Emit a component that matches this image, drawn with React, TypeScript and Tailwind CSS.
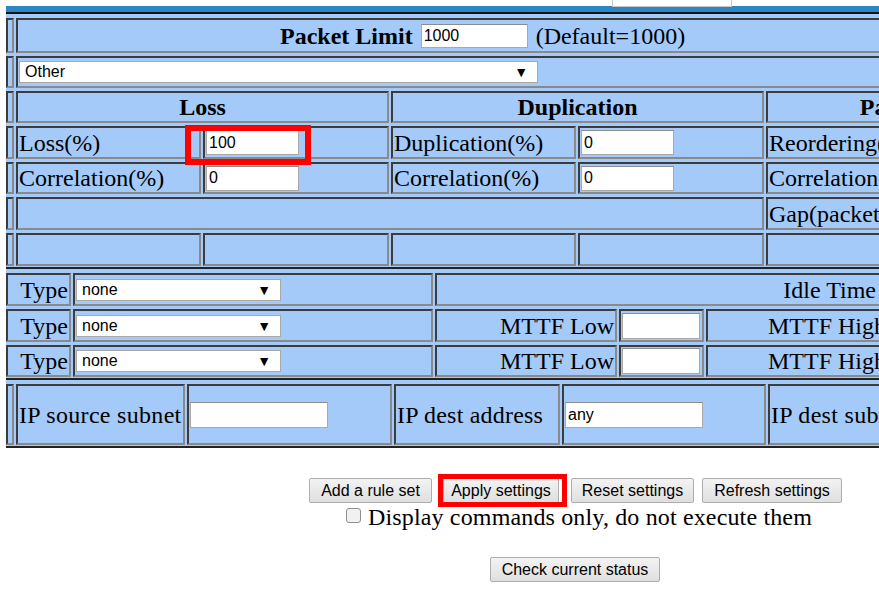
import type { ReactNode } from 'react';

const SANS = "font-['Liberation_Sans',Arial,sans-serif]";

// inset table cell, like border="1" on an old html table
const Cell = ({ className = '', children }: { className?: string; children?: ReactNode }) => (
    <div
        className={`flex items-center bg-[#a4cafa] border-2 border-t-[#3c3c3c] border-l-[#3c3c3c] border-b-[#8a8a8a] border-r-[#8a8a8a] px-px whitespace-nowrap ${className}`}
    >
        {children}
    </div>
);

const TextBox = ({ value = '', className = '' }: { value?: string; className?: string }) => (
    <input
        readOnly
        value={value}
        className={`shrink-0 bg-white border border-[#a9a9a9] border-t-[#8c8c8c] px-[2px] ${SANS} text-[16px] text-black outline-none ${className}`}
    />
);

const Dropdown = ({ value, className = '' }: { value: string; className?: string }) => (
    <div
        className={`shrink-0 flex items-center justify-between bg-white border border-[#a9a9a9] pl-[5px] pr-[9px] ${SANS} text-[16px] leading-none ${className}`}
    >
        <span>{value}</span>
        <span className="text-[14px]">▼</span>
    </div>
);

const Button = ({ label, className = '' }: { label: string; className?: string }) => (
    <button
        className={`h-[25px] shrink-0 border border-[#adadad] rounded-[2px] bg-linear-to-b from-[#f3f3f3] to-[#dfdfdf] ${SANS} text-[16px] text-black leading-none ${className}`}
    >
        {label}
    </button>
);

const Tiny = () => <Cell />;

const App = () => {
    return (
        <div className="relative w-[879px] h-[592px] overflow-hidden bg-white font-['Liberation_Serif','Times_New_Roman',serif] text-[24px] text-black">
            {/* top strip with the clipped field from above */}
            <div className="h-[6px] pl-[612px]">
                <div className="relative z-10 h-[7px] w-[120px] bg-white border-x border-b border-[#c4c4c4]" />
            </div>
            <div className="ml-[6px] h-[6px] bg-[#2b86c5]" />
            <div className="ml-[6px] h-[2px] bg-[#111111]" />

            {/* Section A: limits, loss, duplication, reordering */}
            <div className="ml-[6px] w-[1150px] bg-[#a4cafa] pt-[4px] pb-[1px] border-b-2 border-[#222222]">
                <div className="grid grid-cols-[8px_185px_186px_185px_186px_185px_186px] grid-rows-[35px_32px_32px_33px_32px_33px_33px] gap-x-[2px] gap-y-[3px]">
                    <Tiny />
                    <Cell className="col-span-6 pl-[262px]">
                        <span className="font-bold">Packet Limit</span>
                        <TextBox value="1000" className="ml-[8px] w-[107px] h-[24px]" />
                        <span className="ml-[8px]">(Default=1000)</span>
                    </Cell>

                    <Tiny />
                    <Cell className="col-span-6">
                        <Dropdown value="Other" className="w-[519px] h-[22px]" />
                    </Cell>

                    <Tiny />
                    <Cell className="col-span-2 justify-center font-bold">Loss</Cell>
                    <Cell className="col-span-2 justify-center font-bold">Duplication</Cell>
                    <Cell className="col-span-2 justify-center font-bold">Packet reordering</Cell>

                    <Tiny />
                    <Cell>Loss(%)</Cell>
                    <Cell>
                        <div className="relative flex">
                            <TextBox value="100" className="w-[93px] h-[25px]" />
                            <div className="absolute -left-[21px] -top-[5px] -right-[12px] -bottom-[10px] border-[6px] border-[#ff0000]" />
                        </div>
                    </Cell>
                    <Cell>Duplication(%)</Cell>
                    <Cell>
                        <TextBox value="0" className="w-[93px] h-[25px]" />
                    </Cell>
                    <Cell>Reordering(%)</Cell>
                    <Cell>
                        <TextBox value="0" className="w-[93px] h-[25px]" />
                    </Cell>

                    <Tiny />
                    <Cell>Correlation(%)</Cell>
                    <Cell>
                        <TextBox value="0" className="w-[93px] h-[25px]" />
                    </Cell>
                    <Cell>Correlation(%)</Cell>
                    <Cell>
                        <TextBox value="0" className="w-[93px] h-[25px]" />
                    </Cell>
                    <Cell>Correlation(%)</Cell>
                    <Cell>
                        <TextBox value="0" className="w-[93px] h-[25px]" />
                    </Cell>

                    <Tiny />
                    <Cell className="col-span-4" />
                    <Cell>Gap(packets)</Cell>
                    <Cell>
                        <TextBox value="" className="w-[93px] h-[25px]" />
                    </Cell>

                    <Tiny />
                    <Cell />
                    <Cell />
                    <Cell />
                    <Cell />
                    <Cell />
                    <Cell />
                </div>
            </div>

            {/* Section B: link failures */}
            <div className="ml-[6px] w-[1150px] bg-[#a4cafa] pt-[4px] pb-[1px] border-b-2 border-[#222222]">
                <div className="grid grid-cols-[65px_360px_182px_85px_183px_200px] grid-rows-[33px_33px_32px] gap-x-[2px] gap-y-[3px]">
                    <Cell className="justify-end">Type</Cell>
                    <Cell>
                        <Dropdown value="none" className="w-[205px] h-[22px]" />
                    </Cell>
                    <Cell className="col-span-3 justify-end pr-[11px]">Idle Time</Cell>
                    <Cell>
                        <TextBox value="" className="w-[78px] h-[26px]" />
                    </Cell>

                    <Cell className="justify-end">Type</Cell>
                    <Cell>
                        <Dropdown value="none" className="w-[205px] h-[22px]" />
                    </Cell>
                    <Cell className="justify-end">MTTF Low</Cell>
                    <Cell>
                        <TextBox value="" className="w-[78px] h-[26px]" />
                    </Cell>
                    <Cell className="justify-end">MTTF High</Cell>
                    <Cell>
                        <TextBox value="" className="w-[78px] h-[26px]" />
                    </Cell>

                    <Cell className="justify-end">Type</Cell>
                    <Cell>
                        <Dropdown value="none" className="w-[205px] h-[22px]" />
                    </Cell>
                    <Cell className="justify-end">MTTF Low</Cell>
                    <Cell>
                        <TextBox value="" className="w-[78px] h-[26px]" />
                    </Cell>
                    <Cell className="justify-end">MTTF High</Cell>
                    <Cell>
                        <TextBox value="" className="w-[78px] h-[26px]" />
                    </Cell>
                </div>
            </div>

            {/* Section C: addresses */}
            <div className="ml-[6px] w-[1150px] bg-[#a4cafa] pt-[4px] pb-[1px] border-b-2 border-[#222222]">
                <div className="grid grid-cols-[8px_169px_205px_166px_204px_200px] grid-rows-[61px] gap-x-[2px]">
                    <Tiny />
                    <Cell className="tracking-[0.3px]">IP source subnet</Cell>
                    <Cell>
                        <TextBox value="" className="w-[138px] h-[26px]" />
                    </Cell>
                    <Cell className="tracking-[0.2px]">IP dest address</Cell>
                    <Cell>
                        <TextBox value="any" className="w-[138px] h-[26px]" />
                    </Cell>
                    <Cell className="tracking-[0.3px]">IP dest subnet</Cell>
                </div>
            </div>

            {/* actions */}
            <div className="mt-[30px] flex items-start pl-[309px]">
                <Button label="Add a rule set" className="w-[123px]" />
                <div className="relative ml-[11px] flex">
                    <Button label="Apply settings" className="w-[116px]" />
                    <div className="absolute -left-[5px] -top-[4px] -right-[8px] -bottom-[4px] border-[5px] border-[#ff0000]" />
                </div>
                <Button label="Reset settings" className="ml-[12px] w-[123px]" />
                <Button label="Refresh settings" className="ml-[8px] w-[140px]" />
            </div>
            <div className="flex h-[28px] pl-[346px]">
                <div className="mt-[5px] w-[15px] h-[15px] rounded-[3px] border border-[#8f8f8f] bg-[#f1f1f1]" />
                <span className="ml-[7px] leading-[28px] tracking-[0.15px]">Display commands only, do not execute them</span>
            </div>
            <div className="mt-[26px] flex pl-[490px]">
                <Button label="Check current status" className="w-[170px]" />
            </div>
        </div>
    );
};

export default App;
